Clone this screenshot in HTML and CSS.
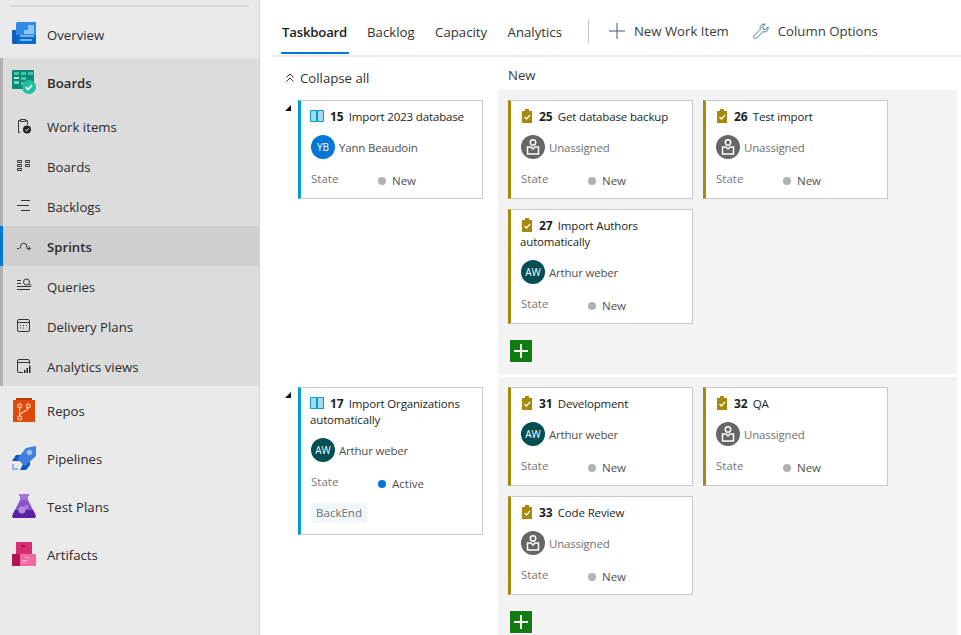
FILE: index.html
```html
<!DOCTYPE html>
<html lang="en">

<head>
    <meta charset="UTF-8">
    <meta name="viewport" content="width=device-width, initial-scale=1.0">
    <title>Taskboard</title>
    <link rel="stylesheet" href="styles.css">
</head>

<body>
    <nav class="sidebar">
        <div class="top-rule"></div>
        <a class="nav-item hub">
            <svg class="hub-icon" viewBox="0 0 24 24"><path fill="#0f5fb8" d="M0 8h6v14H1.500A1.500 1.500 0 0 1 0 20.500z"/><path fill="#2f8be6" d="M4 1.500A1.500 1.500 0 0 1 5.500 0H24v22H4z"/><path fill="#8cc4f5" d="M8 12h4V8h4V3h6v9z"/><path fill="#0b6bcb" d="M4 13h20v9H4z"/><path fill="#6fb2ee" d="M8 13h14v2H8zM8 17h12v2H8z"/></svg>
            <span>Overview</span>
        </a>
        <div class="nav-group">
            <a class="nav-item hub strong">
                <svg class="hub-icon" viewBox="0 0 24 24"><rect y="0" width="22" height="19" rx="1" fill="#0f8a78"/><path fill="#45c2a8" d="M2 2h5v3H2zM9 2h5v3H9zM16 2h5v3h-5zM9 7h5v3H9zM9 12h5v3H9z"/><path fill="#b8ece0" d="M2 7h5v2H2z"/><path fill="#6fd6c0" d="M2 11h5v3H2z"/><circle cx="17" cy="17" r="7" fill="#1fbfa0"/><path d="M13.800 17.200l2.300 2.300 4-4.300" fill="none" stroke="#fff" stroke-width="1.700"/></svg>
                <span>Boards</span>
            </a>
            <a class="nav-item sub">
                <svg class="sub-icon" viewBox="0 0 16 16"><path d="M4 14.500H2.500v-12h2M9.500 2.500h2v4M4.500 1.500h5v2h-5z" fill="none" stroke="#333" stroke-width="1"/><circle cx="11" cy="11.500" r="4" fill="#222"/><path d="M9.300 11.700l1.300 1.200 2.200-2.600" fill="none" stroke="#fff" stroke-width="1"/></svg>
                <span>Work items</span>
            </a>
            <a class="nav-item sub">
                <svg class="sub-icon" viewBox="0 0 16 16"><path d="M1.500 2.500h4v2h-4zM1.500 6.500h4v2h-4zM1.500 10.500h4v2h-4zM9.500 2.500h4v2h-4zM9.500 6.500h4v2h-4z" fill="none" stroke="#333" stroke-width="1"/></svg>
                <span>Boards</span>
            </a>
            <a class="nav-item sub">
                <svg class="sub-icon" viewBox="0 0 16 16"><path d="M5 2.500h9M1 7.500h12M5 12.500h9" fill="none" stroke="#333" stroke-width="1"/></svg>
                <span>Backlogs</span>
            </a>
            <a class="nav-item sub current">
                <svg class="sub-icon" viewBox="0 0 16 16"><path d="M1 10.500h2M4.500 10.500v-2a3.200 3.200 0 0 1 6.400 0v2h3M12.500 8.500l2 2-2 2" fill="none" stroke="#333" stroke-width="1"/></svg>
                <span>Sprints</span>
            </a>
            <a class="nav-item sub">
                <svg class="sub-icon" viewBox="0 0 16 16"><path d="M1 2.500h4M1 5.500h4M1 8.500h14M1 11.500h13" fill="none" stroke="#333" stroke-width="1"/><circle cx="10.500" cy="4" r="3" fill="none" stroke="#333"/><path d="M13 6l2.500 1.500" stroke="#333"/></svg>
                <span>Queries</span>
            </a>
            <a class="nav-item sub">
                <svg class="sub-icon" viewBox="0 0 16 16"><rect x="1.500" y="1.500" width="12" height="12" rx="1.500" fill="none" stroke="#333"/><path d="M2 4.500h11" stroke="#333"/><path d="M4 7h1v1H4zM7 7h1v1H7zM10 7h1v1h-1zM4 9.500h1v1H4zM7 9.500h1v1H7z" fill="#333"/></svg>
                <span>Delivery Plans</span>
            </a>
            <a class="nav-item sub">
                <svg class="sub-icon" viewBox="0 0 16 16"><path d="M7 14.500H3a1.500 1.500 0 0 1-1.500-1.500V3A1.500 1.500 0 0 1 3 1.500h9A1.500 1.500 0 0 1 13.500 3v3M1.500 4.500h12" fill="none" stroke="#333"/><path d="M8 12h1.500v3H8zM10.500 10h1.500v5h-1.500zM13 7.500h1.500V15H13z" fill="#222"/></svg>
                <span>Analytics views</span>
            </a>
        </div>
        <a class="nav-item hub">
            <svg class="hub-icon" viewBox="0 0 24 24"><path fill="#b93a06" d="M4 0h16v3H4z"/><path fill="#de4a0c" d="M1 2h22v22H1z"/><g fill="none" stroke="#f7c3a8" stroke-width="1.200"><circle cx="7.700" cy="7.700" r="1.900"/><circle cx="16.300" cy="7.700" r="1.900"/><circle cx="7.700" cy="20" r="1.900"/><path d="M7.700 9.600v8.500M16.300 9.600c0 4-7.500 3-8.300 8.500"/></g></svg>
            <span>Repos</span>
        </a>
        <a class="nav-item hub">
            <svg class="hub-icon" viewBox="0 0 24 24"><path fill="#0f56c4" d="M4 9h7l-3 6H0zM12 16l6-4v7l-4 5H8z"/><path fill="#3e7fe0" d="M24 0v10L13 20 5 13 14 2z"/><circle cx="17.500" cy="6.500" r="2.800" fill="#9cc3f5"/><path fill="#8db1f2" d="M0 18h2v4h4v2H0z"/></svg>
            <span>Pipelines</span>
        </a>
        <a class="nav-item hub">
            <svg class="hub-icon" viewBox="0 0 24 24"><path fill="#a574d8" d="M7 0h10v2h-1v5h-8V2H7z"/><path fill="#8a50c8" d="M8 6h8l7 14H1z"/><path fill="#5c1fa0" d="M3 16h18l3 6a2 2 0 0 1-2 2H2a2 2 0 0 1-2-2z"/><circle cx="10" cy="16" r="3.500" fill="#b48fe0"/><circle cx="14.500" cy="13" r="2.300" fill="#a87bd8"/></svg>
            <span>Test Plans</span>
        </a>
        <a class="nav-item hub">
            <svg class="hub-icon" viewBox="0 0 24 24"><path fill="#d62e6e" d="M4 0h16v13H4z"/><path fill="#a81550" d="M9 3h4v2H9z"/><path fill="#b3134f" d="M0 12h9v12H0z"/><path fill="#f06a9e" d="M8 12h16v12H8z"/><path fill="#fbb5cf" d="M13 15h4v1h-4zM10 18h6v1h-6zM10 20h4v1h-4z"/></svg>
            <span>Artifacts</span>
        </a>
    </nav>

    <main class="content">
        <header class="tabbar">
            <a class="tab active">Taskboard</a>
            <a class="tab">Backlog</a>
            <a class="tab">Capacity</a>
            <a class="tab">Analytics</a>
            <div class="tab-divider"></div>
            <a class="tool">
                <svg width="16" height="16" viewBox="0 0 16 16"><path d="M8 0v16M0 8h16" stroke="#4a5a78" stroke-width="1"/></svg>
                New Work Item
            </a>
            <a class="tool">
                <svg width="16" height="16" viewBox="0 0 17 17"><path d="M1 13.500L7.700 6.800C6.800 3.500 9.500.5 13 1.200l-2.800 2.800.6 2.500 2.400.5L16 4.200c.8 3.500-2.500 6-5.600 5.200L3.800 16a1.900 1.900 0 0 1-2.800-2.500z" fill="none" stroke="#3c6ea8" stroke-width="1"/></svg>
                Column Options
            </a>
        </header>

        <div class="board-head">
            <div class="collapse-all">
                <svg width="10" height="10" viewBox="0 0 10 10"><path d="M1.500 4.500L5 1l3.500 3.500M1.500 8.500L5 5l3.500 3.500" fill="none" stroke="#333" stroke-width="1"/></svg>
                Collapse all
            </div>
            <div class="column-name">New</div>
        </div>

        <section class="swimlane">
            <div class="parent-cell">
                <span class="twisty"></span>
                <article class="card story">
                    <div class="card-title"><svg class="type-icon" viewBox="0 0 14 14"><path d="M.5 1.500h6v11h-6zM7.500 1.500h6v11h-6z" fill="#a6d8ee" stroke="#009ccc"/></svg><b>15</b>Import 2023 database</div>
                    <div class="assignee"><span class="avatar blue">YB</span>Yann Beaudoin</div>
                    <div class="state-row"><span class="state-label">State</span><span class="state-value"><i class="dot"></i>New</span></div>
                </article>
            </div>
            <div class="task-cell">
                <article class="card task">
                    <div class="card-title"><svg class="type-icon" viewBox="0 0 14 14"><path d="M2 2h3V0h4v2h3v12H2z" fill="#a6880b"/><path d="M4.500 8l2 2 3.500-4" fill="none" stroke="#fff" stroke-width="1.200"/></svg><b>25</b>Get database backup</div>
                    <div class="assignee unassigned"><span class="avatar grey"><svg viewBox="0 0 24 24"><circle cx="12" cy="7.500" r="2.700" fill="none" stroke="#fff" stroke-width="1.500"/><path d="M6.500 12h3.500l2 2 2-2h3.500v7h-11z" fill="none" stroke="#fff" stroke-width="1.500"/></svg></span>Unassigned</div>
                    <div class="state-row"><span class="state-label">State</span><span class="state-value"><i class="dot"></i>New</span></div>
                </article>
                <article class="card task">
                    <div class="card-title"><svg class="type-icon" viewBox="0 0 14 14"><path d="M2 2h3V0h4v2h3v12H2z" fill="#a6880b"/><path d="M4.500 8l2 2 3.500-4" fill="none" stroke="#fff" stroke-width="1.200"/></svg><b>26</b>Test import</div>
                    <div class="assignee unassigned"><span class="avatar grey"><svg viewBox="0 0 24 24"><circle cx="12" cy="7.500" r="2.700" fill="none" stroke="#fff" stroke-width="1.500"/><path d="M6.500 12h3.500l2 2 2-2h3.500v7h-11z" fill="none" stroke="#fff" stroke-width="1.500"/></svg></span>Unassigned</div>
                    <div class="state-row"><span class="state-label">State</span><span class="state-value"><i class="dot"></i>New</span></div>
                </article>
                <article class="card task">
                    <div class="card-title"><svg class="type-icon" viewBox="0 0 14 14"><path d="M2 2h3V0h4v2h3v12H2z" fill="#a6880b"/><path d="M4.500 8l2 2 3.500-4" fill="none" stroke="#fff" stroke-width="1.200"/></svg><b>27</b>Import Authors<br>automatically</div>
                    <div class="assignee"><span class="avatar teal">AW</span>Arthur weber</div>
                    <div class="state-row"><span class="state-label">State</span><span class="state-value"><i class="dot"></i>New</span></div>
                </article>
                <div class="add-row"><button class="add-btn"><svg width="14" height="14" viewBox="0 0 14 14"><path d="M7 0v14M0 7h14" stroke="#fff" stroke-width="2"/></svg></button></div>
            </div>
        </section>

        <section class="swimlane">
            <div class="parent-cell">
                <span class="twisty"></span>
                <article class="card story">
                    <div class="card-title"><svg class="type-icon" viewBox="0 0 14 14"><path d="M.5 1.500h6v11h-6zM7.500 1.500h6v11h-6z" fill="#a6d8ee" stroke="#009ccc"/></svg><b>17</b>Import Organizations<br>automatically</div>
                    <div class="assignee"><span class="avatar teal">AW</span>Arthur weber</div>
                    <div class="state-row"><span class="state-label">State</span><span class="state-value"><i class="dot active"></i>Active</span></div>
                    <div class="tag">BackEnd</div>
                </article>
            </div>
            <div class="task-cell">
                <article class="card task">
                    <div class="card-title"><svg class="type-icon" viewBox="0 0 14 14"><path d="M2 2h3V0h4v2h3v12H2z" fill="#a6880b"/><path d="M4.500 8l2 2 3.500-4" fill="none" stroke="#fff" stroke-width="1.200"/></svg><b>31</b>Development</div>
                    <div class="assignee"><span class="avatar teal">AW</span>Arthur weber</div>
                    <div class="state-row"><span class="state-label">State</span><span class="state-value"><i class="dot"></i>New</span></div>
                </article>
                <article class="card task">
                    <div class="card-title"><svg class="type-icon" viewBox="0 0 14 14"><path d="M2 2h3V0h4v2h3v12H2z" fill="#a6880b"/><path d="M4.500 8l2 2 3.500-4" fill="none" stroke="#fff" stroke-width="1.200"/></svg><b>32</b>QA</div>
                    <div class="assignee unassigned"><span class="avatar grey"><svg viewBox="0 0 24 24"><circle cx="12" cy="7.500" r="2.700" fill="none" stroke="#fff" stroke-width="1.500"/><path d="M6.500 12h3.500l2 2 2-2h3.500v7h-11z" fill="none" stroke="#fff" stroke-width="1.500"/></svg></span>Unassigned</div>
                    <div class="state-row"><span class="state-label">State</span><span class="state-value"><i class="dot"></i>New</span></div>
                </article>
                <article class="card task">
                    <div class="card-title"><svg class="type-icon" viewBox="0 0 14 14"><path d="M2 2h3V0h4v2h3v12H2z" fill="#a6880b"/><path d="M4.500 8l2 2 3.500-4" fill="none" stroke="#fff" stroke-width="1.200"/></svg><b>33</b>Code Review</div>
                    <div class="assignee unassigned"><span class="avatar grey"><svg viewBox="0 0 24 24"><circle cx="12" cy="7.500" r="2.700" fill="none" stroke="#fff" stroke-width="1.500"/><path d="M6.500 12h3.500l2 2 2-2h3.500v7h-11z" fill="none" stroke="#fff" stroke-width="1.500"/></svg></span>Unassigned</div>
                    <div class="state-row"><span class="state-label">State</span><span class="state-value"><i class="dot"></i>New</span></div>
                </article>
                <div class="add-row"><button class="add-btn"><svg width="14" height="14" viewBox="0 0 14 14"><path d="M7 0v14M0 7h14" stroke="#fff" stroke-width="2"/></svg></button></div>
            </div>
        </section>
    </main>
</body>

</html>
```
FILE: styles.css
```css
html,
body {
    height: 100%;
    overflow: hidden;
}

body {
    margin: 0;
    display: flex;
    background-color: #fff;
    color: #323130;
    font-family: "Open Sans", "Noto Sans", sans-serif;
    font-size: 13.2px;
}

/* left navigation */
.sidebar {
    width: 259px;
    height: 635px;
    flex: none;
    background-color: #eaeaea;
    border-right: 1px solid #d4d4d4;
}

.top-rule {
    height: 2px;
    margin: 5px 10px 3px;
    background-color: #d8d8d8;
}

.nav-item {
    display: flex;
    align-items: center;
    color: #2b2b2b;
}

.nav-item span {
    padding-top: 2px;
}

.hub {
    height: 48px;
}

.hub-icon {
    width: 24px;
    height: 24px;
    margin-left: 12px;
    margin-right: 11px;
    flex: none;
}

.sub {
    height: 40px;
}

.sub-icon {
    width: 16px;
    height: 16px;
    margin-left: 16px;
    margin-right: 15px;
    flex: none;
}

.strong {
    font-weight: 600;
}

.nav-group {
    background-color: #dcdcdc;
    box-shadow: inset 3px 0 0 #b0b0b0;
}

.current {
    background-color: #cfcfcf;
    box-shadow: inset 3px 0 0 #0078d4;
    font-weight: 600;
}

/* main area */
.content {
    flex: 1;
    min-width: 0;
    overflow: hidden;
}

.tabbar {
    display: flex;
    align-items: center;
    height: 55px;
    margin-left: 12px;
    padding-left: 10px;
    border-bottom: 2px solid #eaeaea;
}

.tab {
    position: relative;
    height: 55px;
    box-sizing: border-box;
    margin-right: 20.5px;
    padding-top: 23px;
    line-height: 18px;
}

.tab.active {
    margin-right: 20px;
    font-weight: 600;
    letter-spacing: -0.2px;
    color: #201f1e;
}

.tab.active::after {
    content: "";
    position: absolute;
    left: -1px;
    right: -2px;
    bottom: 1px;
    height: 2px;
    background-color: #0078d4;
}

.tab-divider {
    width: 1px;
    height: 24px;
    margin: 7px 20px 0 5.5px;
    background-color: #c8c8c8;
}

.tool {
    display: flex;
    align-items: center;
    gap: 9px;
    margin-right: 24px;
    margin-top: 7px;
    color: #3b3a39;
}

.board-head {
    display: flex;
    height: 33px;
}

.collapse-all {
    display: flex;
    align-items: center;
    gap: 5px;
    width: 223px;
    padding-left: 25px;
    height: 42px;
}

.column-name {
    padding-top: 9px;
    color: #3b3a39;
}

.swimlane {
    display: flex;
    margin-bottom: 3px;
}

.parent-cell {
    position: relative;
    width: 238px;
    padding: 10px 0 0 38px;
    box-sizing: border-box;
    flex: none;
}

.twisty {
    position: absolute;
    left: 25px;
    top: 15px;
    border-style: solid;
    border-width: 0 0 6px 6px;
    border-color: transparent transparent #111 transparent;
}

.task-cell {
    display: flex;
    flex-wrap: wrap;
    align-content: flex-start;
    gap: 10px;
    flex: 1;
    padding: 10px 0 0 10px;
    background-color: #f3f3f3;
    margin-right: 4px;
}

.card {
    width: 185px;
    box-sizing: border-box;
    padding: 8px 8px 8px 9px;
    background-color: #fff;
    border: 1px solid #c8c8c8;
    border-left-width: 3px;
}

.story {
    border-left-color: #009ccc;
}

.task {
    border-left-color: #a6880b;
}

.card-title {
    font-size: 11.5px;
    letter-spacing: -0.15px;
    line-height: 16px;
    color: #201f1e;
}

.card-title b {
    margin-right: 5px;
    font-size: 12px;
    letter-spacing: 0;
    font-weight: 700;
}

.type-icon {
    width: 14px;
    height: 14px;
    margin-right: 6px;
    vertical-align: -2px;
}

.task .type-icon {
    margin-right: 5px;
}

.assignee {
    display: flex;
    align-items: center;
    gap: 4px;
    height: 24px;
    margin: 10px 0 0 1px;
    font-size: 11.5px;
    letter-spacing: -0.2px;
    color: #505050;
}

.unassigned {
    color: #707070;
}

.avatar {
    display: flex;
    align-items: center;
    justify-content: center;
    width: 24px;
    height: 24px;
    border-radius: 50%;
    color: #fff;
    font-size: 10px;
    letter-spacing: 0;
}

.avatar svg {
    width: 24px;
    height: 24px;
}

.blue {
    background-color: #0078d4;
}

.teal {
    background-color: #004e56;
}

.grey {
    background-color: #666;
}

.state-row {
    display: flex;
    margin: 13px 0 0 1px;
    height: 18px;
    font-size: 11.5px;
}

.state-label {
    width: 67px;
    color: #767676;
    line-height: 14px;
}

.state-value {
    display: flex;
    align-items: center;
    height: 17px;
    color: #505050;
}

.dot {
    width: 8px;
    height: 8px;
    margin-right: 6px;
    border-radius: 50%;
    background-color: #b2b2b2;
}

.dot.active {
    background-color: #0078d4;
}

.tag {
    width: 56px;
    height: 20px;
    margin: 10px 0 3px 1px;
    background-color: #eff6fc;
    color: #707070;
    font-size: 11.5px;
    line-height: 20px;
    text-align: center;
}

.add-row {
    width: 100%;
    height: 35px;
    margin-top: 5px;
}

.add-btn {
    display: flex;
    align-items: center;
    justify-content: center;
    width: 24px;
    height: 24px;
    margin-left: 1px;
    padding: 0;
    background-color: #107c10;
    border: 1px solid #fff;
}
```
